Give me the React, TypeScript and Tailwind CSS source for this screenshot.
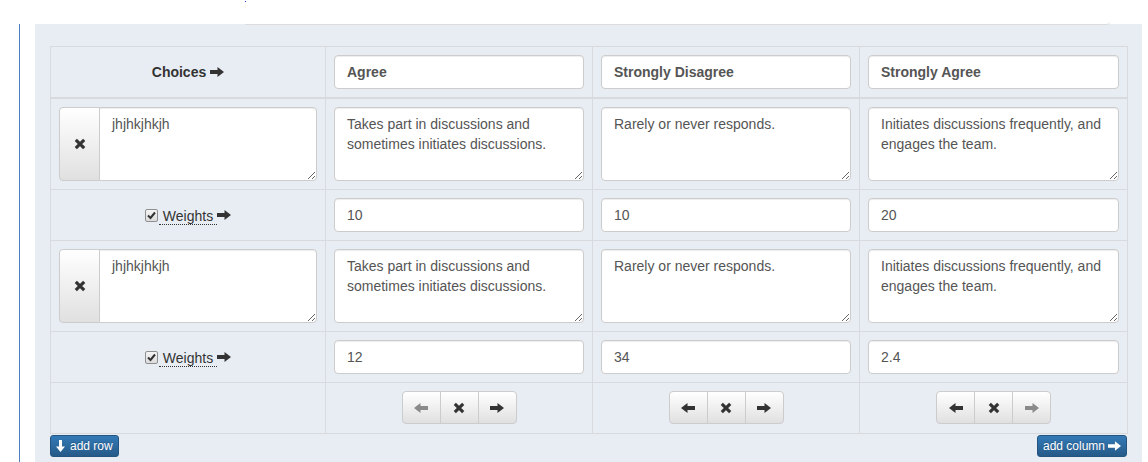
import React from "react";

const Arrow = ({ left = false, className = "" }: { left?: boolean; className?: string }) => (
  <svg
    width="14"
    height="10"
    viewBox="0 0 14 10"
    className={(left ? "-scale-x-100 " : "") + className}
  >
    <path d="M0 3 H7.5 V0 L14 5 L7.5 10 V7 H0 Z" fill="currentColor" />
  </svg>
);

const DownArrow = () => (
  <svg width="9" height="12" viewBox="0 0 9 12">
    <path d="M3 0 H6 V6.5 H9 L4.5 12 L0 6.5 H3 Z" fill="currentColor" />
  </svg>
);

const XIcon = () => (
  <svg width="12" height="12" viewBox="0 0 12 12">
    <path d="M1.8 1.8 L10.2 10.2 M10.2 1.8 L1.8 10.2" stroke="currentColor" strokeWidth="3.1" />
  </svg>
);

const Check = () => (
  <span className="inline-flex w-[13px] h-[13px] items-center justify-center rounded-[2px] border border-[#8f8f8f] bg-[linear-gradient(to_bottom,#f4f4f4,#dcdcdc)] text-[#333]">
    <svg width="9" height="9" viewBox="0 0 9 9">
      <path d="M1 4.5 L3.5 7 L8 1.5" stroke="currentColor" strokeWidth="2" fill="none" />
    </svg>
  </span>
);

const inputCls =
  "block w-full h-[34px] px-3 text-[14px] leading-5 text-[#555] bg-white border border-[#ccc] rounded-[4px] shadow-[inset_0_1px_1px_rgba(0,0,0,0.075)] outline-none";
const taCls =
  "block w-full min-w-0 h-[74px] px-3 py-[6px] text-[14px] leading-5 text-[#555] bg-white border border-[#ccc] shadow-[inset_0_1px_1px_rgba(0,0,0,0.075)] outline-none";
const cell = "border-r border-b border-[#d9dadd] p-2";
const btnDefault =
  "flex items-center justify-center bg-[linear-gradient(to_bottom,#fff_0,#e0e0e0_100%)] border border-[#ccc]";

const cols = ["Agree", "Strongly Disagree", "Strongly Agree"];
const rows = [
  {
    name: "jhjhkjhkjh",
    texts: [
      "Takes part in discussions and sometimes initiates discussions.",
      "Rarely or never responds.",
      "Initiates discussions frequently, and engages the team.",
    ],
    weights: ["10", "10", "20"],
  },
  {
    name: "jhjhkjhkjh",
    texts: [
      "Takes part in discussions and sometimes initiates discussions.",
      "Rarely or never responds.",
      "Initiates discussions frequently, and engages the team.",
    ],
    weights: ["12", "34", "2.4"],
  },
];

const ColButtons = ({ first, last }: { first: boolean; last: boolean }) => (
  <div className="flex justify-center">
    <div className="flex h-[33px]">
      <div className={btnDefault + " w-[39px] rounded-l-[4px] " + (first ? "text-[#8a8a8a]" : "text-[#333]")}>
        <Arrow left />
      </div>
      <div className={btnDefault + " w-[39px] -ml-px text-[#333]"}>
        <XIcon />
      </div>
      <div className={btnDefault + " w-[39px] -ml-px rounded-r-[4px] " + (last ? "text-[#8a8a8a]" : "text-[#333]")}>
        <Arrow />
      </div>
    </div>
  </div>
);

export default function App() {
  return (
    <div className="w-[1148px] h-[462px] overflow-hidden bg-white font-['Liberation_Sans',Arial,sans-serif] text-[#333]">
      <div className="h-6 flex">
        <div className="relative ml-[245px] w-[865px] h-[25px] bg-white border-b border-[#dcdcdc] rounded-br-[4px]">
          <div className="absolute left-0 top-px w-px h-px bg-[#1a2fbf]" />
        </div>
      </div>
      <div className="flex h-[438px]">
        <div className="ml-[19px] w-px bg-[#4d7fbd]" />
        <div className="ml-[15px] w-[1107px] bg-[#e8edf4] pt-[22px] pl-[15px] pr-[14px]">
          <div className="grid grid-cols-[275px_267px_267px_268px] border-l border-t border-[#d9dadd]">
            {/* header */}
            <div className={cell + " border-b-2 flex items-center justify-center gap-1 font-bold text-[14px]"}>
              <span>Choices</span>
              <Arrow />
            </div>
            {cols.map((c) => (
              <div key={c} className={cell + " border-b-2"}>
                <input className={inputCls + " font-bold"} defaultValue={c} />
              </div>
            ))}
            {rows.map((r, ri) => (
              <React.Fragment key={ri}>
                <div className={cell}>
                  <div className="flex">
                    <div className={btnDefault + " shrink-0 w-[41px] h-[74px] rounded-l-[4px] text-[#333] -mr-px"}>
                      <XIcon />
                    </div>
                    <textarea className={taCls + " rounded-r-[4px]"} defaultValue={r.name} />
                  </div>
                </div>
                {r.texts.map((t, ti) => (
                  <div key={ti} className={cell}>
                    <textarea className={taCls + " rounded-[4px]"} defaultValue={t} />
                  </div>
                ))}
                <div className={cell + " flex items-center justify-center text-[14px]"}>
                  <div className="flex items-center">
                    <Check />
                    <span className="ml-px mt-[3px] border-b border-dotted border-[#333] leading-4 px-1">Weights</span>
                    <Arrow />
                  </div>
                </div>
                {r.weights.map((w, wi) => (
                  <div key={wi} className={cell}>
                    <input className={inputCls} defaultValue={w} />
                  </div>
                ))}
              </React.Fragment>
            ))}
            <div className={cell + " h-[51px]"} />
            {cols.map((c, i) => (
              <div key={c} className={cell + " h-[51px]"}>
                <ColButtons first={i === 0} last={i === cols.length - 1} />
              </div>
            ))}
          </div>
          <div className="flex justify-between mt-px pr-px">
            <div className="flex items-center gap-[5px] h-[22px] px-[5px] rounded-[3px] border border-[#245580] bg-[linear-gradient(to_bottom,#337ab7_0,#265a88_100%)] text-white text-[12px] [text-shadow:0_-1px_0_rgba(0,0,0,0.2)]">
              <DownArrow />
              <span>add row</span>
            </div>
            <div className="flex items-center gap-[3px] h-[22px] px-[5px] rounded-[3px] border border-[#245580] bg-[linear-gradient(to_bottom,#337ab7_0,#265a88_100%)] text-white text-[12px] [text-shadow:0_-1px_0_rgba(0,0,0,0.2)]">
              <span>add column</span>
              <svg width="13" height="10" viewBox="0 0 14 10">
                <path d="M0 3 H7.5 V0 L14 5 L7.5 10 V7 H0 Z" fill="currentColor" />
              </svg>
            </div>
          </div>
        </div>
      </div>
    </div>
  );
}
